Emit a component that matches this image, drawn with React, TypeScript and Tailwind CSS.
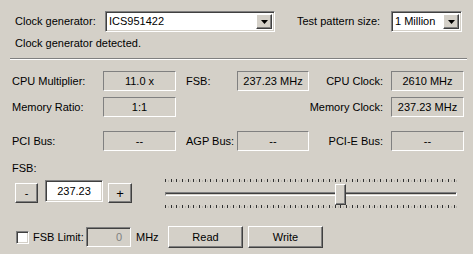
import type { ReactNode } from 'react'

const raised =
  'border border-t-white border-l-white border-r-[#404040] border-b-[#404040] shadow-[inset_-1px_-1px_0_#808080] bg-[#d4d0c8]'
const sunken =
  'border border-t-[#808080] border-l-[#808080] border-r-white border-b-white shadow-[inset_1px_1px_0_#404040,inset_-1px_-1px_0_#d4d0c8]'

function Combo({ value, className }: { value: string; className: string }) {
  return (
    <div className={`${sunken} bg-white h-[21px] flex items-stretch p-[2px] ${className}`}>
      <span className="flex-1 pl-[1px] flex items-center">{value}</span>
      <span className={`${raised} w-[16px] flex items-center justify-center`}>
        <svg width="7" height="4" viewBox="0 0 7 4">
          <path d="M0 0h7L3.5 4z" fill="#000" />
        </svg>
      </span>
    </div>
  )
}

function Box({ children }: { children?: ReactNode }) {
  return (
    <div className="h-[20px] border border-t-[#808080] border-l-[#808080] border-r-white border-b-white flex items-center justify-center">
      {children}
    </div>
  )
}

function Btn({ children, className }: { children: ReactNode; className: string }) {
  return <div className={`${raised} flex items-center justify-center ${className}`}>{children}</div>
}

// slider tick marks, dark every other step
function Ticks() {
  const lines = []
  for (let i = 0; i <= 103; i++) {
    const x = 5 + Math.round(i * 2.83)
    lines.push(
      <rect key={i} x={x} y={i % 2 ? 1 : 0} width="1" height={i % 2 ? 2 : 3} fill={i % 2 ? '#bcb8b0' : '#303030'} />
    )
  }
  return (
    <svg width="302" height="4" viewBox="0 0 302 4" className="block">
      {lines}
    </svg>
  )
}

export default function App() {
  return (
    <div className="w-[473px] h-[254px] bg-[#d4d0c8] text-black text-[11px] leading-[13px] font-['Liberation_Sans',Arial,sans-serif] overflow-hidden">
      {/* clock generator row */}
      <div className="flex items-center pt-[11px] pl-[15px] h-[32px]">
        <span className="w-[90px]">Clock generator:</span>
        <Combo value="ICS951422" className="w-[170px]" />
        <span className="ml-[22px] w-[94px]">Test pattern size:</span>
        <Combo value="1 Million" className="w-[71px]" />
      </div>
      <div className="pl-[15px] mt-[5px]">Clock generator detected.</div>

      <div className="ml-[10px] w-[457px] mt-[8px] border-t border-t-[#808080] border-b border-b-white" />

      {/* readouts */}
      <div className="grid grid-cols-[91px_73px_10px_51px_72px_82px_73px] items-center pl-[12px] mt-[11px]">
        <span>CPU Multiplier:</span>
        <Box>11.0 x</Box>
        <span />
        <span>FSB:</span>
        <Box>237.23 MHz</Box>
        <span className="text-right pr-[8px]">CPU Clock:</span>
        <Box>2610 MHz</Box>
      </div>
      <div className="grid grid-cols-[91px_73px_10px_51px_72px_82px_73px] items-center pl-[12px] mt-[6px]">
        <span>Memory Ratio:</span>
        <Box>1:1</Box>
        <span />
        <span />
        <span />
        <span className="text-right pr-[8px] whitespace-nowrap">Memory Clock:</span>
        <Box>237.23 MHz</Box>
      </div>
      <div className="grid grid-cols-[91px_73px_10px_51px_72px_82px_73px] items-center pl-[12px] mt-[14px]">
        <span>PCI Bus:</span>
        <Box>--</Box>
        <span />
        <span>AGP Bus:</span>
        <Box>--</Box>
        <span className="text-right pr-[8px]">PCI-E Bus:</span>
        <Box>--</Box>
      </div>

      {/* FSB */}
      <div className="pl-[12px] mt-[11px]">FSB:</div>
      <div className="flex items-start h-[35px] pl-[15px]">
        <Btn className="w-[23px] h-[20px] mt-[8px]">-</Btn>
        <div className={`${sunken} bg-white w-[58px] h-[22px] mt-[5px] ml-[7px] flex items-center justify-center`}>
          237.23
        </div>
        <Btn className="w-[24px] h-[20px] mt-[8px] ml-[5px] text-[13px]">+</Btn>
        <div className="relative w-[302px] ml-[28px] pt-[4px]">
          <Ticks />
          <div className="mx-[5px] mt-[9px] h-[4px] border border-t-[#808080] border-l-[#808080] border-r-white border-b-white shadow-[inset_0_1px_0_#404040]" />
          <div className="mt-[9px]">
            <Ticks />
          </div>
          <div className={`${raised} absolute left-[175px] top-[9px] w-[11px] h-[21px]`} />
        </div>
      </div>

      {/* bottom row */}
      <div className="flex items-center h-[22px] pl-[16px] mt-[16px]">
        <div className={`${sunken} bg-white w-[13px] h-[13px]`} />
        <span className="ml-[4px] w-[53px]">FSB Limit:</span>
        <div className={`${sunken} w-[45px] h-[20px] flex items-center justify-end pr-[8px] text-[#808080]`}>0</div>
        <span className="ml-[5px] w-[32px]">MHz</span>
        <Btn className="w-[75px] h-[22px]">Read</Btn>
        <Btn className="w-[75px] h-[22px] ml-[5px]">Write</Btn>
      </div>
    </div>
  )
}
